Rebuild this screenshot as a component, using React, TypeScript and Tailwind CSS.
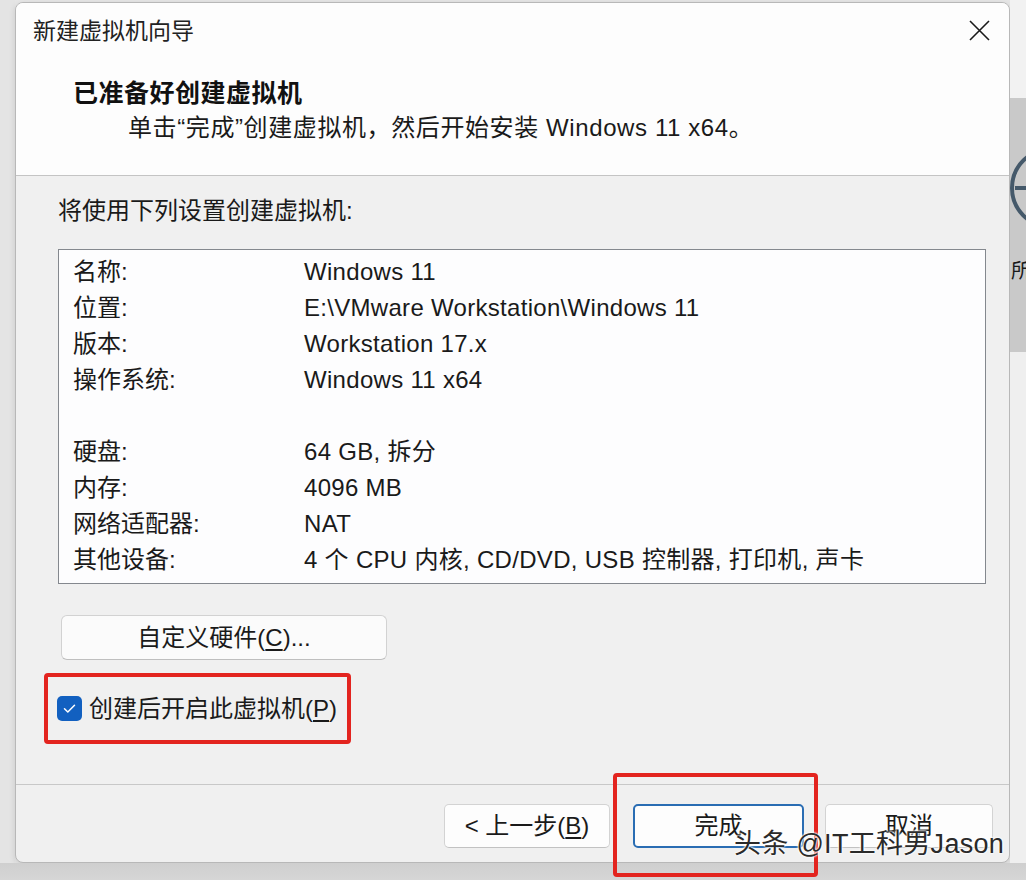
import React from "react";

function Btn({ w, children, primary }: { w: string; children: React.ReactNode; primary?: boolean }) {
  return (
    <div
      className={
        primary
          ? "flex h-[44px] w-[171px] items-center justify-center rounded-[5px] border-2 border-[#2a6db3] bg-[#fdfdfd] text-[24px] leading-none"
          : w === "a"
          ? "flex h-[44px] w-[166px] items-center justify-center rounded-[5px] border border-[#d3d3d3] border-b-[#c2c2c2] bg-[#fdfdfd] text-[24px] leading-none"
          : "flex h-[44px] w-[168px] items-center justify-center rounded-[5px] border border-[#d3d3d3] border-b-[#c2c2c2] bg-[#fdfdfd] text-[24px] leading-none"
      }
    >
      {children}
    </div>
  );
}

const rows: [string, string][] = [
  ["名称:", "Windows 11"],
  ["位置:", "E:\\VMware Workstation\\Windows 11"],
  ["版本:", "Workstation 17.x"],
  ["操作系统:", "Windows 11 x64"],
  ["", ""],
  ["硬盘:", "64 GB, 拆分"],
  ["内存:", "4096 MB"],
  ["网络适配器:", "NAT"],
  ["其他设备:", "4 个 CPU 内核, CD/DVD, USB 控制器, 打印机, 声卡"],
];

export default function App() {
  return (
    <div className="relative flex h-[880px] w-[1026px] flex-col overflow-hidden bg-[#e6e6e6] font-['Liberation_Sans','Noto_Sans_CJK_SC',sans-serif] text-[#1a1a1a]">
      <div className="flex h-[863px] shrink-0">
        <div className="w-[15px] shrink-0 bg-[#e4e4e4]" />
        {/* dialog */}
        <div className="mt-[2px] flex h-[861px] w-[995px] shrink-0 flex-col overflow-hidden rounded-[8px] border border-[#b8b8b8] bg-[#f0f0f0] shadow-[0_2px_6px_rgba(0,0,0,0.12)]">
          {/* header */}
          <div className="relative flex h-[173px] shrink-0 flex-col border-b border-[#c4c4c4] bg-[#fdfdfd]">
            <div className="pl-[17px] pt-[13px] text-[23px] leading-[30px] text-[#222]">新建虚拟机向导</div>
            <svg className="absolute right-[19px] top-[17px]" width="21" height="21" viewBox="0 0 21 21">
              <path d="M1 1 L20 20 M20 1 L1 20" stroke="#1a1a1a" strokeWidth="1.6" fill="none" />
            </svg>
            <div className="mt-[31px] pl-[57px] text-[25px] font-bold leading-[32px] tracking-[0.5px] text-[#111]">已准备好创建虚拟机</div>
            <div className="mt-[3px] pl-[112px] text-[24px] leading-[32px] tracking-[0.6px]">
              单击“完成”创建虚拟机，然后开始安装 Windows 11 x64。
            </div>
          </div>
          {/* body */}
          <div className="flex flex-1 flex-col">
            <div className="pl-[42px] pt-[19px] text-[24px] leading-[32px]">将使用下列设置创建虚拟机:</div>
            <div className="ml-[42px] mt-[22px] h-[335px] w-[928px] border border-[#84888e] bg-[#fdfdfe] pl-[14px] pt-[4px]">
              <div className="grid grid-cols-[231px_1fr] text-[24px] leading-[36px]">
                {rows.map(([k, v], i) => (
                  <React.Fragment key={i}>
                    <div className="h-[36px]">{k}</div>
                    <div className="h-[36px] tracking-[0.3px]">{v}</div>
                  </React.Fragment>
                ))}
              </div>
            </div>
            <div className="ml-[45px] mt-[31px] flex h-[45px] w-[326px] items-center justify-center rounded-[6px] border border-[#d2d2d2] border-b-[#bfbfbf] bg-[#fbfbfb] text-[24px] leading-none">
              自定义硬件(<span className="underline underline-offset-[3px]">C</span>)...
            </div>
            <div className="ml-[28px] mt-[13px] flex h-[71px] w-[307px] items-center gap-[7px] rounded-[4px] border-[4px] border-[#e3241f] pl-[9px]">
              <div className="flex h-[25px] w-[25px] items-center justify-center rounded-[5px] bg-[#1260c0]">
                <svg width="15" height="15" viewBox="0 0 15 15">
                  <path d="M2.5 7.8 L5.8 11 L12.5 4.2" stroke="#fff" strokeWidth="1.5" fill="none" strokeLinecap="round" strokeLinejoin="round" />
                </svg>
              </div>
              <div className="text-[24px] leading-none">
                创建后开启此虚拟机(<span className="underline underline-offset-[3px]">P</span>)
              </div>
            </div>
            <div className="flex-1" />
            <div className="flex h-[78px] shrink-0 items-start justify-end border-t border-[#c8c8c8] pr-[16px] pt-[19px]">
              <Btn w="a">
                &lt; 上一步(<span className="underline underline-offset-[3px]">B</span>)
              </Btn>
              <div className="w-[23px]" />
              <Btn w="b" primary>
                完成
              </Btn>
              <div className="w-[21px]" />
              <Btn w="c">取消</Btn>
            </div>
          </div>
        </div>
        {/* background app strip on the right */}
        <div className="flex w-[16px] shrink-0 flex-col overflow-hidden">
          <div className="h-[98px] shrink-0 bg-[#f2f2f2]" />
          <div className="relative h-[254px] shrink-0 overflow-hidden bg-[#c9c9c9]">
            <div className="absolute left-[0px] top-[49px] h-[82px] w-[82px] rounded-full border-[4px] border-[#45596a]" />
            <div className="absolute left-[5px] top-[88px] h-[4px] w-[20px] bg-[#45596a]" />
            <div className="absolute left-[1px] top-[160px] text-[20px] leading-[26px] text-[#1a1a1a]">所</div>
          </div>
          <div className="flex-1 bg-[#efefef]" />
        </div>
      </div>
      <div className="flex-1 bg-[linear-gradient(to_bottom,#cfcfcf,#d6d6d6)]" />

      {/* overlays */}
      <div className="absolute left-[613px] top-[773px] h-[104px] w-[205px] rounded-[4px] border-[4px] border-[#e3241f]" />
      <div className="absolute left-[734px] top-[827px] whitespace-nowrap text-[27px] leading-[34px] tracking-[0.3px] text-[#2a2a2a] [text-shadow:0_0_2px_#fff,0_0_2px_#fff,0_0_3px_#fff]">
        头条 @IT工科男Jason
      </div>
    </div>
  );
}
